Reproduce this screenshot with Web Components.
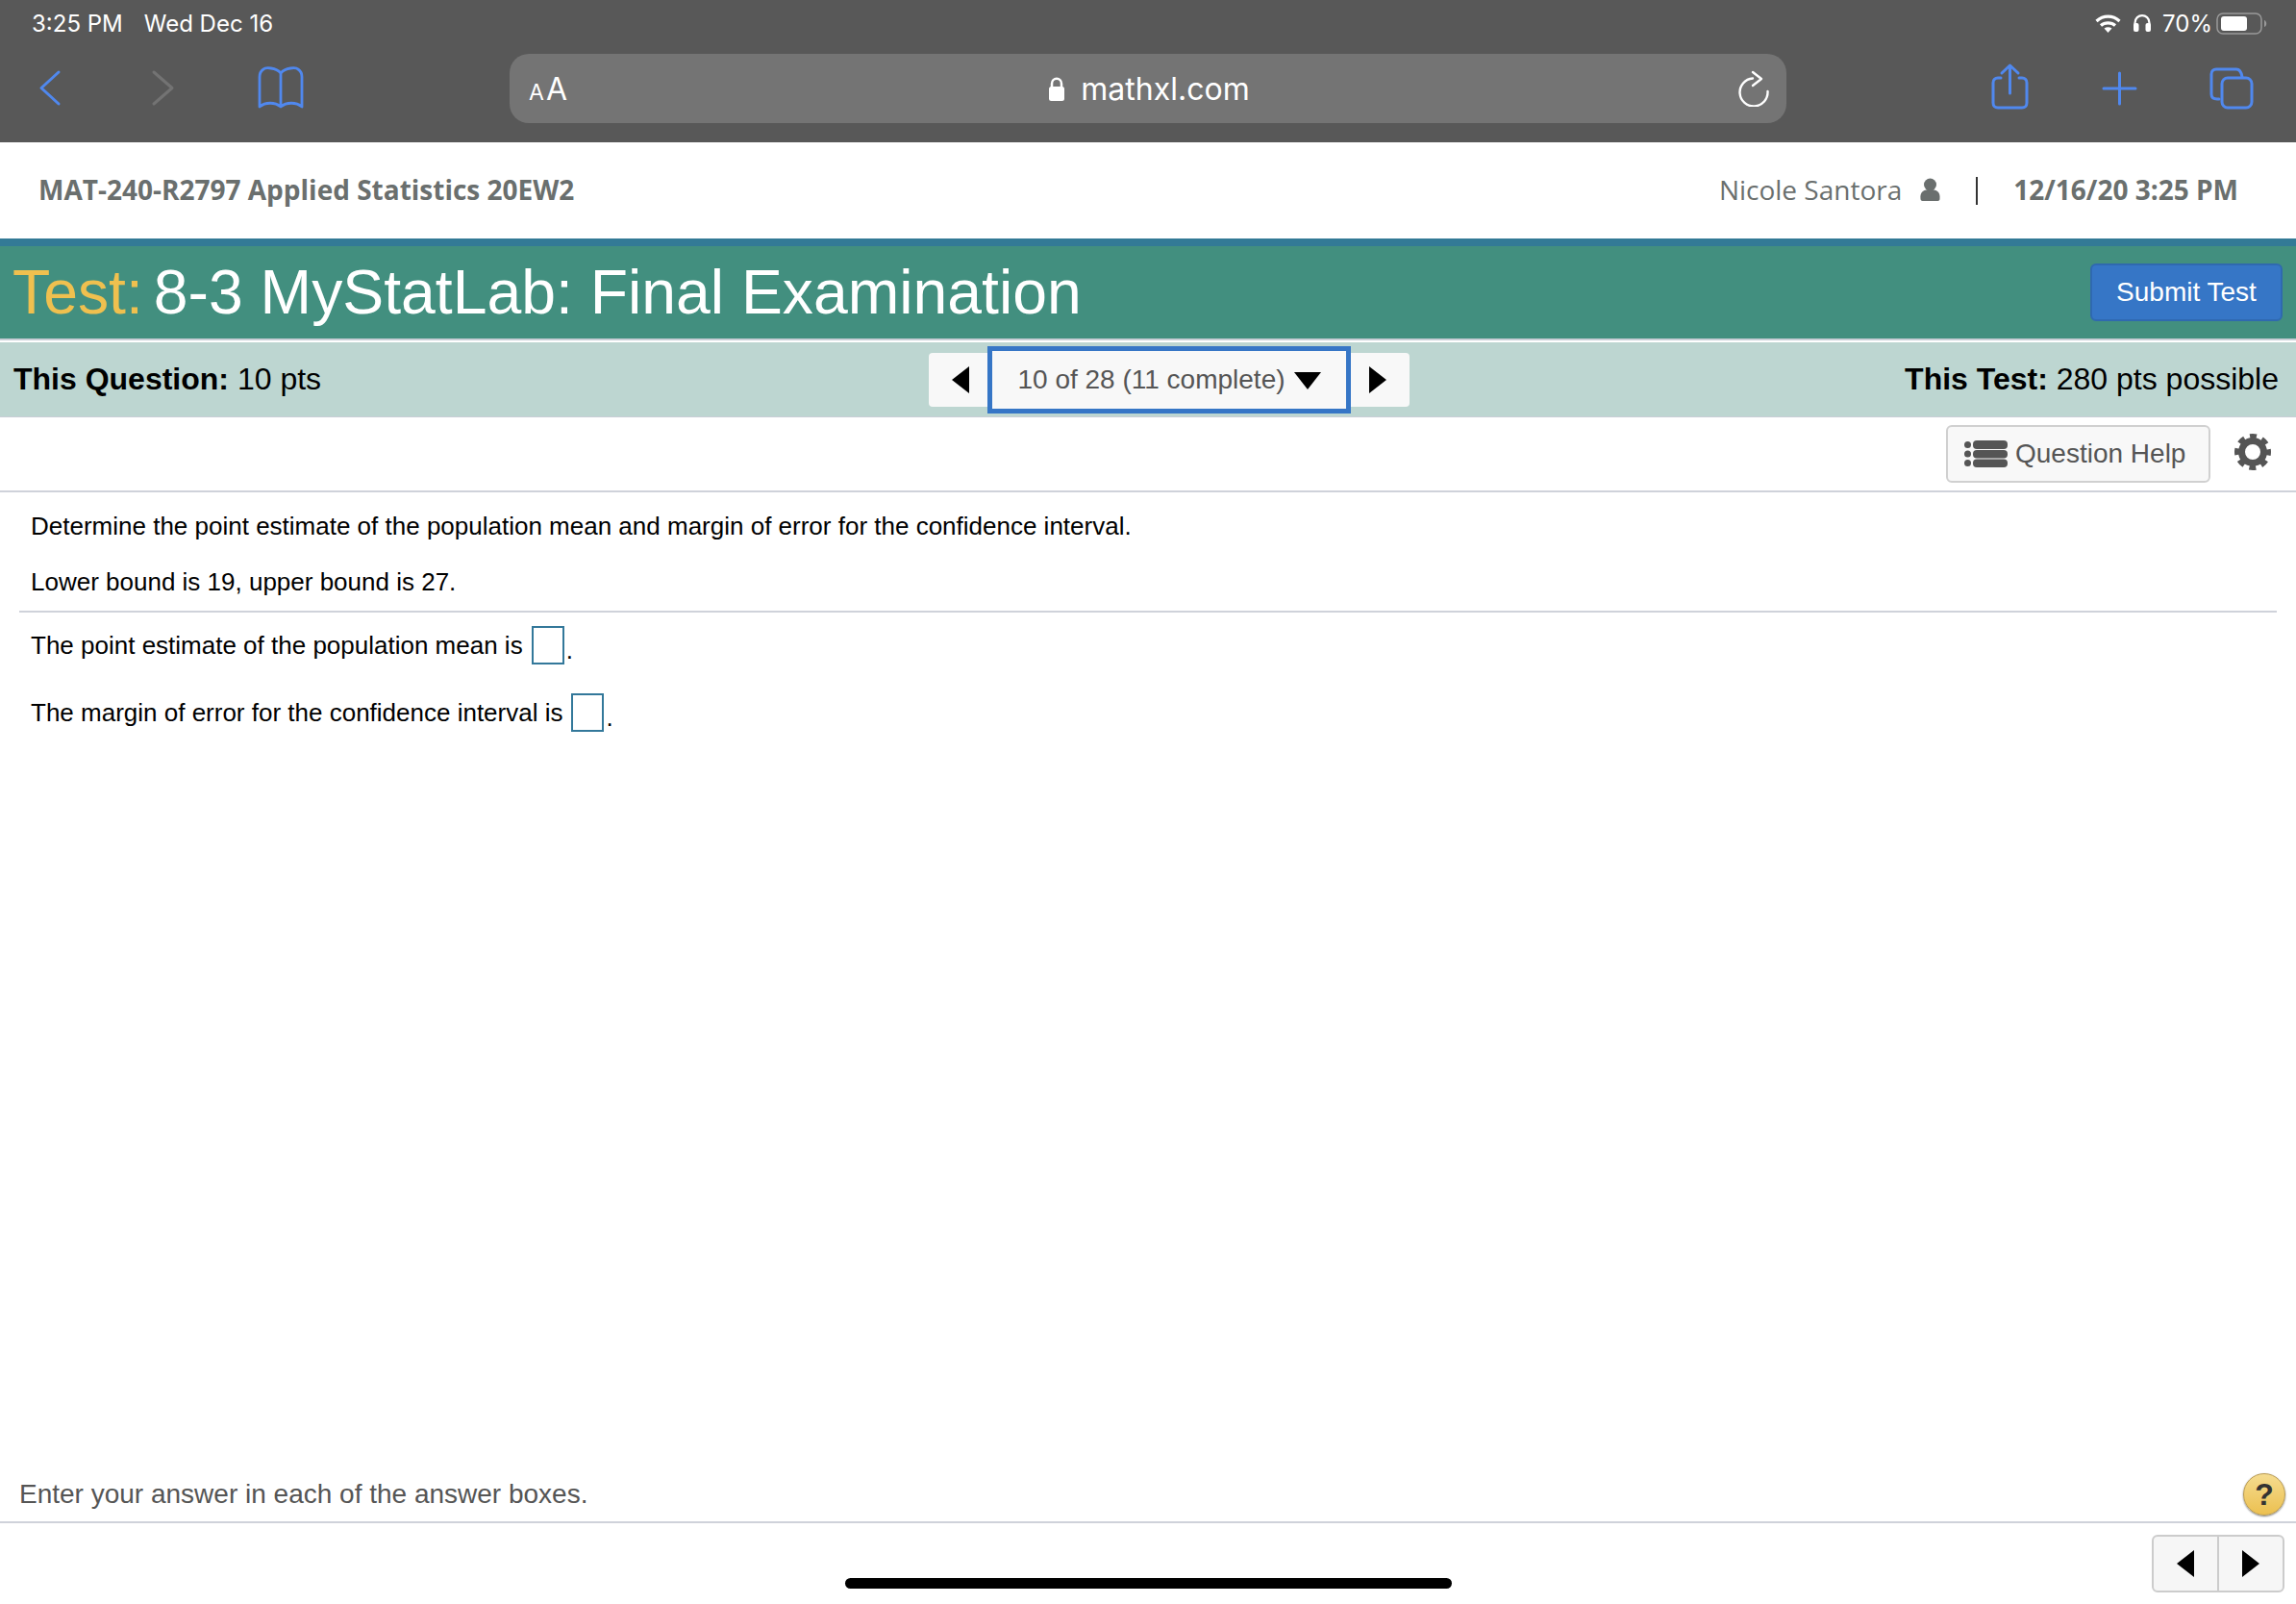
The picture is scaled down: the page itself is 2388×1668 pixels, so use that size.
<!DOCTYPE html>
<html>
<head>
<meta charset="utf-8">
<title>Test</title>
<style>
  html, body { margin: 0; height: 100%; background: #fff; overflow: hidden; }
  exam-page { height: 1668px; }
</style>
</head>
<body>
<exam-page>
  <browser-chrome url="mathxl.com"></browser-chrome>
  <course-header course="MAT-240-R2797 Applied Statistics 20EW2" student="Nicole Santora" stamp="12/16/20 3:25 PM"></course-header>
  <test-title name="8-3 MyStatLab: Final Examination"></test-title>
  <question-nav></question-nav>
  <help-toolbar></help-toolbar>
  <question-pane>
    <p slot="prompt">Determine the point estimate of the population mean and margin of error for the confidence interval.</p>
    <p slot="prompt">Lower bound is 19, upper bound is 27.</p>
    <answer-line label="The point estimate of the population mean is"></answer-line>
    <answer-line label="The margin of error for the confidence interval is"></answer-line>
  </question-pane>
  <exam-footer></exam-footer>
</exam-page>

<script>
const ICON_LEFT = '<svg width="18" height="28" viewBox="0 0 18 28"><path d="M18 0V28L0 14Z" fill="#000"/></svg>';
const ICON_RIGHT = '<svg width="18" height="28" viewBox="0 0 18 28"><path d="M0 0V28L18 14Z" fill="#000"/></svg>';

class ExamPage extends HTMLElement {
  constructor() {
    super();
    this.attachShadow({ mode: 'open' }).innerHTML = `
      <style>
        :host { display: flex; flex-direction: column; position: relative; font-family: "Liberation Sans", Arial, sans-serif; }
        .home { position: absolute; left: 879px; top: 1641px; width: 631px; height: 11px; border-radius: 6px; background: #000; }
      </style>
      <slot></slot>
      <div class="home"></div>`;
  }
}

class BrowserChrome extends HTMLElement {
  constructor() {
    super();
    this.attachShadow({ mode: 'open' }).innerHTML = `
      <style>
        :host { display: block; height: 148px; background: #585858; color: #fff; font-family: Inter, "Liberation Sans", sans-serif; }
        .status { height: 48px; display: flex; align-items: center; justify-content: space-between; padding: 0 30px 0 33px; font-size: 24px; box-sizing: border-box; }
        .status .left { display: flex; gap: 22px; }
        .status .right { display: flex; align-items: center; }
        .tools { display: grid; grid-template-columns: 530px 1fr 530px; height: 72px; margin-top: 8px; }
        .group { display: flex; align-items: center; }
        .url { background: #747474; border-radius: 20px; display: grid; grid-template-columns: 1fr auto 1fr; align-items: center; padding: 0 18px 0 20px; }
        .aa { font-size: 32px; line-height: 1; display: flex; align-items: baseline; padding-top: 2px; }
        .aa small { font-size: 23px; margin-right: 2px; }
        .site { display: flex; align-items: center; gap: 16px; font-size: 32px; }
        .reload { justify-self: end; display: flex; }
        svg { display: block; }
      </style>
      <div class="status">
        <div class="left"><span>3:25 PM</span><span>Wed Dec 16</span></div>
        <div class="right">
          <svg width="27" height="19" viewBox="0 0 27 19"><path d="M1.500 7C8.500 .5 18.500 .5 25.500 7M6 11.500C10 8 17 8 21 11.500" fill="none" stroke="#fff" stroke-width="3.200"/><path d="M9.500 14.500C12 12.800 15 12.800 17.500 14.500L13.500 19Z" fill="#fff"/></svg>
          <svg width="20" height="18" viewBox="0 0 20 18" style="margin-left:12px"><path d="M2.500 12V9C2.500 -1.500 17.500 -1.500 17.500 9V12" fill="none" stroke="#fff" stroke-width="2.200"/><rect x="1" y="9" width="5.500" height="9" rx="2" fill="#fff"/><rect x="13.500" y="9" width="5.500" height="9" rx="2" fill="#fff"/></svg>
          <span style="margin-left:11px">70%</span>
          <svg width="53" height="23" viewBox="0 0 53 23" style="margin-left:4px"><rect x="1" y="1" width="46" height="21" rx="6" fill="none" stroke="#999" stroke-width="1.500"/><rect x="5" y="4" width="27" height="15" rx="3" fill="#fff"/><path d="M50 8C53 9 53 14 50 15Z" fill="#999"/></svg>
        </div>
      </div>
      <div class="tools">
        <div class="group">
          <svg width="530" height="72" viewBox="0 0 530 72" fill="none" stroke-linecap="round" stroke-linejoin="round">
            <path d="M61 19L43 35.500L61 52" stroke="#5088ee" stroke-width="3"/>
            <path d="M160 19L179 35.500L160 52" stroke="#737373" stroke-width="3"/>
            <path d="M292 20V54M292 20C287 14 276 14 274 16C271 18 270 20 270 24V55C276 50 286 50 292 55C298 50 308 50 314 55V24C314 20 313 18 310 16C308 14 297 14 292 20Z" stroke="#5088ee" stroke-width="2.800"/>
          </svg>
        </div>
        <div class="url">
          <div class="aa"><small>A</small>A</div>
          <div class="site">
            <svg width="18" height="26" viewBox="0 0 18 26"><path d="M4 12V8C4 1 14 1 14 8V12" fill="none" stroke="#fff" stroke-width="2.500"/><rect x="1" y="11" width="16" height="15" rx="2.500" fill="#fff"/></svg>
            <span>mathxl.com</span>
          </div>
          <div class="reload">
            <svg width="32" height="38" viewBox="0 0 32 38" fill="none" stroke="#fff" stroke-width="2.400" stroke-linecap="round" stroke-linejoin="round"><path d="M15 8.500A14.500 14.500 0 1 0 30.500 22"/><path d="M15 2L24 9L15 16"/></svg>
          </div>
        </div>
        <div class="group">
          <svg width="530" height="72" viewBox="0 0 530 72" fill="none" stroke="#5088ee" stroke-width="3" stroke-linecap="round" stroke-linejoin="round">
            <path d="M223 25H220C217 25 215 27 215 30V51C215 54 217 56 220 56H245C248 56 250 54 250 51V30C250 27 248 25 245 25H242"/>
            <path d="M232.500 41V12M224 20L232.500 12L241 20"/>
            <path d="M330 36H363M346.500 20V52"/>
            <path d="M450 47H448C444 47 442 45 442 42V21C442 18 444 16 447 16H468C471 16 473 18 474 24"/>
            <rect x="453" y="25" width="31" height="31" rx="6"/>
          </svg>
        </div>
      </div>`;
  }
}

class CourseHeader extends HTMLElement {
  constructor() {
    super();
    this.attachShadow({ mode: 'open' }).innerHTML = `
      <style>
        :host { display: flex; align-items: center; justify-content: space-between; height: 100px; padding: 0 60px 2px 40px; box-sizing: border-box; color: #6a6f6e; font-family: "Open Sans", sans-serif; font-size: 28px; background: #fff; }
        b { font-weight: 700; }
        .right { display: flex; align-items: center; }
        .sep { width: 2px; height: 29px; background: #333; margin: 3px 37px 0 36px; }
        svg { margin-left: 18px; }
      </style>
      <b id="course"></b>
      <div class="right">
        <span id="student"></span>
        <svg width="23" height="24" viewBox="0 0 22 24"><circle cx="11" cy="7" r="6.500" fill="#6a6f6e"/><path d="M1 22C0 14 5 12 11 12C17 12 22 14 21 22C21 23 20 24 19 24H3C2 24 1 23 1 22Z" fill="#6a6f6e"/></svg>
        <div class="sep"></div>
        <b id="stamp"></b>
      </div>`;
    ['course', 'student', 'stamp'].forEach((name) => {
      this.shadowRoot.getElementById(name).textContent = this.getAttribute(name);
    });
  }
}

class TestTitle extends HTMLElement {
  constructor() {
    super();
    this.attachShadow({ mode: 'open' }).innerHTML = `
      <style>
        :host { display: flex; align-items: center; justify-content: space-between; height: 104px; padding: 0 14px 0 13px; box-sizing: border-box; background: #428f7f; border-top: 8px solid #337a96; color: #fff; }
        .name { font-size: 64.3px; display: flex; gap: 11px; }
        .label { color: #efc04f; }
        button { width: 200px; height: 60px; background: #3676c6; border: 2px solid #2f69b0; border-radius: 6px; color: #fff; font: 28px "Liberation Sans", Arial, sans-serif; padding: 0; }
      </style>
      <div class="name"><span class="label">Test:</span><span id="name"></span></div>
      <button>Submit Test</button>`;
    this.shadowRoot.getElementById('name').textContent = this.getAttribute('name');
  }
}

class QuestionNav extends HTMLElement {
  constructor() {
    super();
    this.attachShadow({ mode: 'open' }).innerHTML = `
      <style>
        :host { display: grid; grid-template-columns: 952px auto 1fr; align-items: center; height: 82px; padding: 2px 18px 0 14px; box-sizing: border-box; background: #bdd6d1; border-top: 2px solid #c8ced6; box-shadow: inset 0 2px 0 #fff; border-bottom: 1px solid #c8ced6; font-size: 32px; color: #000; }
        .right { justify-self: end; }
        .pager { display: flex; align-items: center; background: #f8f8f8; border-radius: 4px; height: 56px; width: 500px; }
        .arrow { width: 61px; box-sizing: border-box; display: flex; justify-content: center; }
        .arrow.prev { padding-left: 5px; }
        .arrow.next { padding-right: 5px; }
        .select { flex: 1; height: 70px; margin: -7px 0; box-sizing: border-box; border: 5px solid #3676c6; background: #f8f8f8; display: flex; align-items: center; justify-content: center; gap: 9px; color: #555; font-size: 28px; }
        .select svg { margin-top: 2px; }
      </style>
      <div><b>This Question:</b> 10 pts</div>
      <div class="pager">
        <div class="arrow prev">${ICON_LEFT}</div>
        <div class="select">10 of 28 (11 complete)<svg width="28" height="18" viewBox="0 0 28 18"><path d="M0 0H28L14 18Z" fill="#000"/></svg></div>
        <div class="arrow next">${ICON_RIGHT}</div>
      </div>
      <div class="right"><b>This Test:</b> 280 pts possible</div>`;
  }
}

class HelpToolbar extends HTMLElement {
  constructor() {
    super();
    this.attachShadow({ mode: 'open' }).innerHTML = `
      <style>
        :host { display: flex; align-items: center; justify-content: flex-end; gap: 25px; height: 78px; padding: 0 26px 0 0; box-sizing: border-box; border-bottom: 2px solid #cfd2da; background: #fff; }
        .help { display: flex; align-items: center; gap: 8px; width: 275px; height: 60px; padding: 0 0 0 17px; box-sizing: border-box; background: #f8f8f8; border: 2px solid #d0d0d0; border-radius: 6px; color: #555; font-size: 28px; }
        svg { display: block; }
        .gear { margin-top: -5px; }
      </style>
      <div class="help">
        <svg width="45" height="28" viewBox="0 0 45 28" fill="#555"><circle cx="3.500" cy="4.500" r="3.500"/><circle cx="3.500" cy="14" r="3.500"/><circle cx="3.500" cy="23.500" r="3.500"/><rect x="9" y="0" width="36" height="9" rx="4"/><rect x="9" y="10" width="36" height="8.500" rx="4"/><rect x="9" y="19.500" width="36" height="8.500" rx="4"/></svg>
        <span>Question Help</span>
      </div>
      <svg class="gear" width="38" height="38" viewBox="0 0 38 38" fill="none" stroke="#555"><circle cx="19" cy="19" r="11.500" stroke-width="7"/><circle cx="19" cy="19" r="16.500" stroke-width="5" stroke-dasharray="7 5.960" stroke-dashoffset="3.500"/></svg>`;
  }
}

class QuestionPane extends HTMLElement {
  constructor() {
    super();
    this.attachShadow({ mode: 'open' }).innerHTML = `
      <style>
        :host { display: block; flex: 1; min-height: 0; padding: 0 20px; color: #000; font-size: 26px; background: #fff; }
        .prompt { padding: 20px 12px 15px; border-bottom: 2px solid #cfd2da; }
        ::slotted(p) { margin: 0 0 28px; line-height: 30px; }
        ::slotted(p:last-of-type) { margin-bottom: 0; }
        .answers { padding: 14px 12px 0; display: flex; flex-direction: column; gap: 30px; }
      </style>
      <div class="prompt"><slot name="prompt"></slot></div>
      <div class="answers"><slot></slot></div>`;
  }
}

class AnswerLine extends HTMLElement {
  constructor() {
    super();
    this.attachShadow({ mode: 'open' }).innerHTML = `
      <style>
        :host { display: flex; align-items: center; height: 40px; }
        .box { width: 34px; height: 40px; box-sizing: border-box; border: 2px solid #33789a; margin: 0 2px 0 9px; background: #fff; }
        .dot { align-self: flex-end; line-height: 30px; }
      </style>
      <span id="label"></span><span class="box"></span><span class="dot">.</span>`;
    this.shadowRoot.getElementById('label').textContent = this.getAttribute('label');
  }
}

class ExamFooter extends HTMLElement {
  constructor() {
    super();
    this.attachShadow({ mode: 'open' }).innerHTML = `
      <style>
        :host { display: block; background: #fff; }
        .hint { display: flex; align-items: center; justify-content: space-between; height: 52px; box-sizing: border-box; padding: 0 11px 6px 20px; border-bottom: 2px solid #cfd2da; color: #555; font-size: 28px; }
        .q { width: 44px; height: 44px; border-radius: 50%; box-sizing: border-box; border: 1px solid #b89a50; background: linear-gradient(#f5dc90, #ecc050); box-shadow: 0 1px 2px rgba(0,0,0,.5); color: #333; font: bold 32px/42px "Liberation Sans", Arial, sans-serif; text-align: center; }
        .nav { display: flex; justify-content: flex-end; padding: 12px 12px 0 0; height: 84px; box-sizing: border-box; align-items: flex-start; }
        .pair { display: flex; height: 60px; width: 138px; box-sizing: border-box; background: #f6f6f6; border: 2px solid #ccc; border-radius: 6px; }
        .pair div { flex: 1; display: flex; align-items: center; justify-content: center; }
        .pair div + div { border-left: 2px solid #ccc; }
      </style>
      <div class="hint"><span>Enter your answer in each of the answer boxes.</span><div class="q">?</div></div>
      <div class="nav"><div class="pair"><div>${ICON_LEFT}</div><div>${ICON_RIGHT}</div></div></div>`;
  }
}

customElements.define('exam-page', ExamPage);
customElements.define('browser-chrome', BrowserChrome);
customElements.define('course-header', CourseHeader);
customElements.define('test-title', TestTitle);
customElements.define('question-nav', QuestionNav);
customElements.define('help-toolbar', HelpToolbar);
customElements.define('question-pane', QuestionPane);
customElements.define('answer-line', AnswerLine);
customElements.define('exam-footer', ExamFooter);
</script>
</body>
</html>
